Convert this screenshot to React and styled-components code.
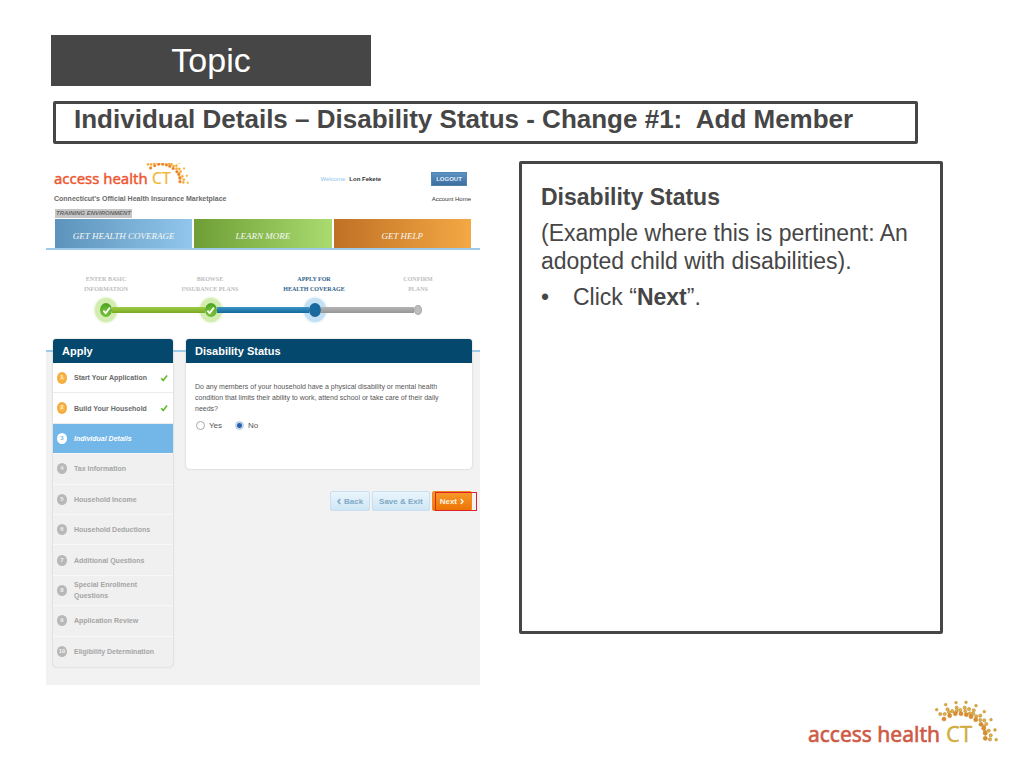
import React from 'react';
import styled, { createGlobalStyle, css } from 'styled-components';

const GlobalStyle = createGlobalStyle`
  * { box-sizing: border-box; }
  body { margin: 0; background: #fff; color: #464646; font-family: "Liberation Sans", Arial, sans-serif; }
  h1, h2, h3, p, ul, ol, fieldset { margin: 0; padding: 0; border: 0; }
  ul, ol { list-style: none; }
  a { color: inherit; text-decoration: none; }
  button { font-family: inherit; cursor: pointer; }
`;

/* ---------- slide ---------- */
const Slide = styled.div`
  display: flex;
  flex-direction: column;
  padding: 35px 26px 16px 46px;
`;
const Topic = styled.h1`
  width: 320px;
  max-width: 100%;
  margin-left: 5px;
  background: #464646;
  color: #fff;
  font-size: 34px;
  font-weight: 400;
  line-height: 51px;
  text-align: center;
`;
const Subtitle = styled.h2`
  margin: 15px 80px 0 7px;
  padding: 0 18px 7px;
  border: 3px solid #464646;
  border-radius: 2px;
  font-size: 26px;
  line-height: 30px;
`;
const Columns = styled.div`
  display: grid;
  grid-template-columns: minmax(0, 434fr) minmax(0, 424fr);
  gap: 39px;
  align-items: start;
  margin: 17px 55px 0 0;
`;
const Notes = styled.section`
  display: flex;
  flex-direction: column;
  gap: 8px;
  min-height: 473px;
  padding: 19px 16px 19px 19px;
  border: 3px solid #464646;
  border-radius: 2px;
  font-size: 23px;
  line-height: 28px;
`;
const NotesTitle = styled.h3`
  font-size: 23px;
`;
const Bullets = styled.ul`
  li { display: flex; }
  li::before { content: "•"; flex: 0 0 32px; }
`;
const Footer = styled.footer`
  display: flex;
  justify-content: flex-end;
  margin-top: 15px;
`;

/* ---------- marketplace page ---------- */
const Shot = styled.div`
  margin-top: 2px;
  background: #fff;
  font-size: 7px;
  line-height: 10px;
`;
const Header = styled.header`
  display: flex;
  justify-content: space-between;
  height: 56px;
  padding: 0 9px 0 7px;
`;
const Brand = styled.div`
  display: flex;
  flex-direction: column;
  align-items: flex-start;
`;
const Tagline = styled.p`
  margin: 4px 0 5px 1px;
  color: #6b6b6b;
  font-weight: 700;
`;
const Training = styled.span`
  margin-left: 2px;
  padding: 0 1px;
  background: #c6c6c6;
  color: #666;
  font-size: 6px;
  font-style: italic;
  font-weight: 700;
  line-height: 9px;
`;
const Account = styled.div`
  display: flex;
  flex-direction: column;
  align-items: flex-end;
  gap: 8px;
  padding-top: 9px;
`;
const AccountRow = styled.div`
  display: flex;
  align-items: center;
  gap: 50px;
  padding-right: 4px;
`;
const Welcome = styled.p`
  display: flex;
  gap: 4px;
  color: #8cc4ec;
  font-size: 6px;
  b { color: #333; }
`;
const Logout = styled.button`
  width: 36px;
  height: 14px;
  padding: 0;
  border: 1px solid #5284b0;
  background: linear-gradient(#5b93c5, #3c6f9f);
  color: #e4eef7;
  font-size: 6px;
  font-weight: 700;
  line-height: 12px;
`;
const AccountHome = styled.a`
  color: #333;
  font-size: 6px;
`;
const Nav = styled.nav`
  display: grid;
  grid-template-columns: repeat(3, 1fr);
  gap: 2px;
  padding: 0 9px;
  border-bottom: 2px solid #9ccbea;
`;
const navColors = {
  blue: '#5c93ba, #92c6ec',
  green: '#6e9e35, #a9db71',
  orange: '#c07024, #f4a944',
};
const NavLink = styled.a`
  height: 29px;
  padding-top: 3px;
  background: linear-gradient(90deg, ${(p) => navColors[p.$tone]});
  color: #f4f8f4;
  font-family: "Liberation Serif", serif;
  font-size: 9px;
  font-style: italic;
  line-height: 29px;
  text-align: center;
`;

const Progress = styled.div`
  padding: 24px 10px 17px 8px;
`;
const StepLabels = styled.ol`
  display: grid;
  grid-template-columns: repeat(4, 1fr);
`;
const StepLabel = styled.li`
  color: ${(p) => (p.$current ? '#2f628a' : '#bdbdbd')};
  font-family: "Liberation Serif", serif;
  font-size: 6px;
  font-weight: 700;
  text-align: center;
  white-space: pre-line;
`;
const Track = styled.div`
  display: flex;
  align-items: center;
  height: 24px;
  margin: 4px calc(12.5% - 6px) 0;
`;
const Segment = styled.span`
  flex: 1;
  height: 6px;
  background: ${(p) => p.$fill};
  z-index: 1;
`;
const nodeStyles = {
  done: css`
    background: radial-gradient(circle at 50% 70%, #7fc63a, #3f9a1c);
    box-shadow: 0 0 0 5px #d3ecb0, 0 0 2px 6px #e4f4cf;
  `,
  current: css`
    background: #19699c;
    box-shadow: 0 0 0 5px #c4e0f4, 0 0 2px 6px #dceefa;
  `,
  todo: css`
    width: 8px;
    height: 10px;
    margin-right: 2px;
    background: #bdbdbd;
    border: 1px solid #a9a9a9;
  `,
};
const Node = styled.span`
  display: grid;
  place-items: center;
  width: 12px;
  height: 14px;
  border-radius: 50%;
  ${(p) => nodeStyles[p.$state]}
`;

const Body = styled.div`
  display: grid;
  grid-template-columns: minmax(0, 120fr) minmax(0, 286fr);
  gap: 13px;
  align-items: start;
  padding: 0 8px 18px 7px;
  background: linear-gradient(#fff 11px, #9ccbea 11px, #9ccbea 13px, #f2f2f2 13px);
`;
const Card = styled.section`
  border-radius: 4px;
  background: ${(p) => (p.$muted ? '#f0f0f0' : '#fff')};
  box-shadow: 0 0 2px #bbb;
`;
const CardTitle = styled.h3`
  height: 24px;
  padding: 0 9px;
  border-radius: 3px 3px 0 0;
  background: #05486e;
  color: #fff;
  font-size: 11px;
  line-height: 24px;
`;
const Steps = styled.ol`
  display: grid;
  grid-auto-rows: 1fr;
  min-height: 304px;
`;
const itemStyles = {
  done: css`background: #fff; color: #6a6a6a;`,
  active: css`background: #72b7e8; color: #fff; font-style: italic;`,
  todo: css`color: #a5a5a5;`,
};
const StepItem = styled.li`
  display: grid;
  grid-template-columns: 10px 1fr auto;
  align-items: center;
  column-gap: 7px;
  padding: 0 5px 0 4px;
  border-bottom: 1px solid ${(p) => (p.$state === 'done' ? '#ececec' : '#f8f8f8')};
  font-weight: 700;
  line-height: 11px;
  white-space: pre-line;
  ${(p) => itemStyles[p.$state]}
  &:last-child { border-bottom: 0; }
`;
const badgeStyles = {
  done: css`background: radial-gradient(#fbc25b, #f09a26); color: #fff0d0;`,
  active: css`background: #fff; color: #72b7e8;`,
  todo: css`background: #b8b8b8; color: #f0f0f0;`,
};
const Badge = styled.span`
  height: ${(p) => (p.$state === 'done' ? 12 : 11)}px;
  border-radius: 50%;
  font-size: 6px;
  font-style: normal;
  line-height: 11px;
  text-align: center;
  ${(p) => badgeStyles[p.$state]}
`;

const Question = styled.fieldset`
  min-height: 106px;
  padding: 18px 30px 0 9px;
  color: #555;
  line-height: 11px;
`;
const Options = styled.div`
  display: flex;
  gap: 12px;
  margin-top: 6px;
`;
const Option = styled.label`
  display: flex;
  align-items: center;
  gap: 4px;
  font-size: 8px;
  line-height: 11px;
`;
const Radio = styled.input`
  appearance: none;
  width: 9px;
  height: 9px;
  margin: 0 0 0 1px;
  border: 1px solid #a8a8a8;
  border-radius: 50%;
  background: #fff;
  &:checked {
    border-color: #b4cbe6;
    background: radial-gradient(#2c62ad 2px, #c7daf1 3px);
  }
`;
const Actions = styled.div`
  display: flex;
  justify-content: flex-end;
  gap: 2px;
  margin-top: 22px;
`;
const ActionButton = styled.button`
  display: flex;
  align-items: center;
  justify-content: center;
  gap: 3px;
  height: 20px;
  padding: 0 6px;
  border: 1px solid #c9dfed;
  border-radius: 2px;
  background: linear-gradient(#eaf5fc, #cfe6f5);
  color: #7fa9c4;
  font-size: 8px;
  font-weight: 700;
  ${(p) => p.$primary && css`
    position: relative;
    padding: 0 7px;
    border-color: #ee8a1c;
    background: linear-gradient(#f79a2b, #ec7404);
    color: #fff3e0;
  `}
`;
const Highlight = styled.span`
  position: absolute;
  inset: 0 -6px -1px 2px;
  border: 1px solid #e0202c;
`;

/* ---------- drawings ---------- */
const OUTER = [[128.7, 9.7], [137.7, 4.7], [148, 2.7], [158, 2.3], [168, 5.7], [176.3, 11.7], [183, 19.7], [187, 30], [188.2, 39.7]];
const MIDDLE = [[132.3, 14], [136.7, 14], [141, 12.3], [139.5, 9.3], [144.3, 11], [148.7, 7.7], [148.7, 11], [152.3, 10], [156.7, 7.7], [157.3, 11], [161, 9], [162, 13.3], [165.7, 10.3], [165.3, 13.7], [168.3, 16.3], [172.3, 15.7], [172.3, 20], [176.3, 20.3], [178.3, 24], [176, 26.7], [180.7, 30.7], [177, 31.7], [182.7, 35.3], [182, 39.3]];
const INNER = [[136, 19], [141.7, 15.7], [147.3, 13.7], [153, 13.7], [158.3, 14.7], [163, 16.7], [167.7, 19.7], [173, 24.3], [175.7, 28.3], [177.3, 33.3], [177.3, 38.3]];

const LogoSvg = styled.svg`
  display: block;
  font-family: "Noto Sans", sans-serif;
`;

function Logo({ width, height, top = 0, red, gold, dots, ring }) {
  return (
    <LogoSvg width={width} height={height} viewBox={`0 ${top} 190 ${50 - top}`} role="img" aria-label="access health CT">
      <text x="0" y="42" fontSize="21" fill={red} stroke={red} strokeWidth="0.6">access health</text>
      <text x="138" y="42" fontSize="22" fill={gold} stroke={gold} strokeWidth="0.3">CT</text>
      {OUTER.map(([x, y]) => <circle key={`${x}-${y}`} cx={x} cy={y} r="1.4" fill={dots[0]} stroke={ring} strokeWidth="0.4" />)}
      {MIDDLE.map(([x, y]) => <circle key={`${x}-${y}`} cx={x} cy={y} r="1.6" fill={dots[1]} stroke={ring} strokeWidth="0.6" />)}
      {INNER.map(([x, y]) => <circle key={`${x}-${y}`} cx={x} cy={y} r="2.1" fill={dots[2]} stroke={ring} strokeWidth="0.4" />)}
    </LogoSvg>
  );
}

function Check({ size, color, weight = 2 }) {
  return (
    <svg width={size} height={size} viewBox="0 0 10 10" fill="none" stroke={color} strokeWidth={weight} aria-hidden="true">
      <path d="M1.5 5.2 4 8 8.8 1.8" />
    </svg>
  );
}

function Chevron({ left }) {
  return (
    <svg width="4" height="7" viewBox="0 0 4 7" fill="none" stroke="currentColor" strokeWidth="1.5" aria-hidden="true">
      <path d={left ? 'M3.2 1 1 3.5 3.2 6' : 'M.8 1 3 3.5 .8 6'} />
    </svg>
  );
}

const STEPS = [
  ['Start Your Application', 'done'],
  ['Build Your Household', 'done'],
  ['Individual Details', 'active'],
  ['Tax Information', 'todo'],
  ['Household Income', 'todo'],
  ['Household Deductions', 'todo'],
  ['Additional Questions', 'todo'],
  ['Special Enrollment\nQuestions', 'todo'],
  ['Application Review', 'todo'],
  ['Eligibility Determination', 'todo'],
];

function MarketplacePage() {
  return (
    <Shot>
      <Header>
        <Brand>
          <Logo width={137} height={27} top={12} red="#ee5630" gold="#f2b632" dots={['#f4b83c', '#f2a630', '#ee7d2a']} ring="#f4b03c" />
          <Tagline>Connecticut's Official Health Insurance Marketplace</Tagline>
          <Training>TRAINING ENVIRONMENT</Training>
        </Brand>
        <Account>
          <AccountRow>
            <Welcome>Welcome <b>Lon Fekete</b></Welcome>
            <Logout type="button">LOGOUT</Logout>
          </AccountRow>
          <AccountHome href="#account">Account Home</AccountHome>
        </Account>
      </Header>
      <Nav>
        <NavLink href="#coverage" $tone="blue">GET HEALTH COVERAGE</NavLink>
        <NavLink href="#learn" $tone="green">LEARN MORE</NavLink>
        <NavLink href="#help" $tone="orange">GET HELP</NavLink>
      </Nav>
      <Progress>
        <StepLabels>
          <StepLabel>{'ENTER BASIC\nINFORMATION'}</StepLabel>
          <StepLabel>{'BROWSE\nINSURANCE PLANS'}</StepLabel>
          <StepLabel $current>{'APPLY FOR\nHEALTH COVERAGE'}</StepLabel>
          <StepLabel>{'CONFIRM\nPLANS'}</StepLabel>
        </StepLabels>
        <Track>
          <Node $state="done"><Check size={9} color="#fff" /></Node>
          <Segment $fill="linear-gradient(#9ccb45, #7aaa22)" />
          <Node $state="done"><Check size={9} color="#fff" /></Node>
          <Segment $fill="linear-gradient(#3c93c4, #14699c)" />
          <Node $state="current" />
          <Segment $fill="linear-gradient(#b4b4b4, #969696)" />
          <Node $state="todo" />
        </Track>
      </Progress>
      <Body>
        <Card $muted>
          <CardTitle>Apply</CardTitle>
          <Steps>
            {STEPS.map(([label, state], i) => (
              <StepItem key={label} $state={state}>
                <Badge $state={state}>{i + 1}</Badge>
                <span>{label}</span>
                {state === 'done' && <Check size={8} color="#62b82e" />}
              </StepItem>
            ))}
          </Steps>
        </Card>
        <div>
          <Card>
            <CardTitle>Disability Status</CardTitle>
            <Question aria-labelledby="question">
              <p id="question">
                Do any members of your household have a physical disability or mental health
                condition that limits their ability to work, attend school or take care of their daily
                needs?
              </p>
              <Options>
                <Option><Radio type="radio" name="disability" />Yes</Option>
                <Option><Radio type="radio" name="disability" defaultChecked />No</Option>
              </Options>
            </Question>
          </Card>
          <Actions>
            <ActionButton type="button"><Chevron left />Back</ActionButton>
            <ActionButton type="button">Save &amp; Exit</ActionButton>
            <ActionButton type="button" $primary>Next <Chevron /><Highlight /></ActionButton>
          </Actions>
        </div>
      </Body>
    </Shot>
  );
}

export default function App() {
  return (
    <>
      <GlobalStyle />
      <Slide>
        <Topic>Topic</Topic>
        <Subtitle>Individual Details – Disability Status - Change #1:&nbsp; Add Member</Subtitle>
        <Columns>
          <MarketplacePage />
          <Notes>
            <NotesTitle>Disability Status</NotesTitle>
            <p>(Example where this is pertinent: An adopted child with disabilities).</p>
            <Bullets>
              <li><span>Click “<b>Next</b>”.</span></li>
            </Bullets>
          </Notes>
        </Columns>
        <Footer>
          <Logo width={190} height={50} red="#cf5a45" gold="#cfae3f" dots={['#d9a93a', '#e3b14a', '#e0892f']} ring="#b98a2c" />
        </Footer>
      </Slide>
    </>
  );
}
